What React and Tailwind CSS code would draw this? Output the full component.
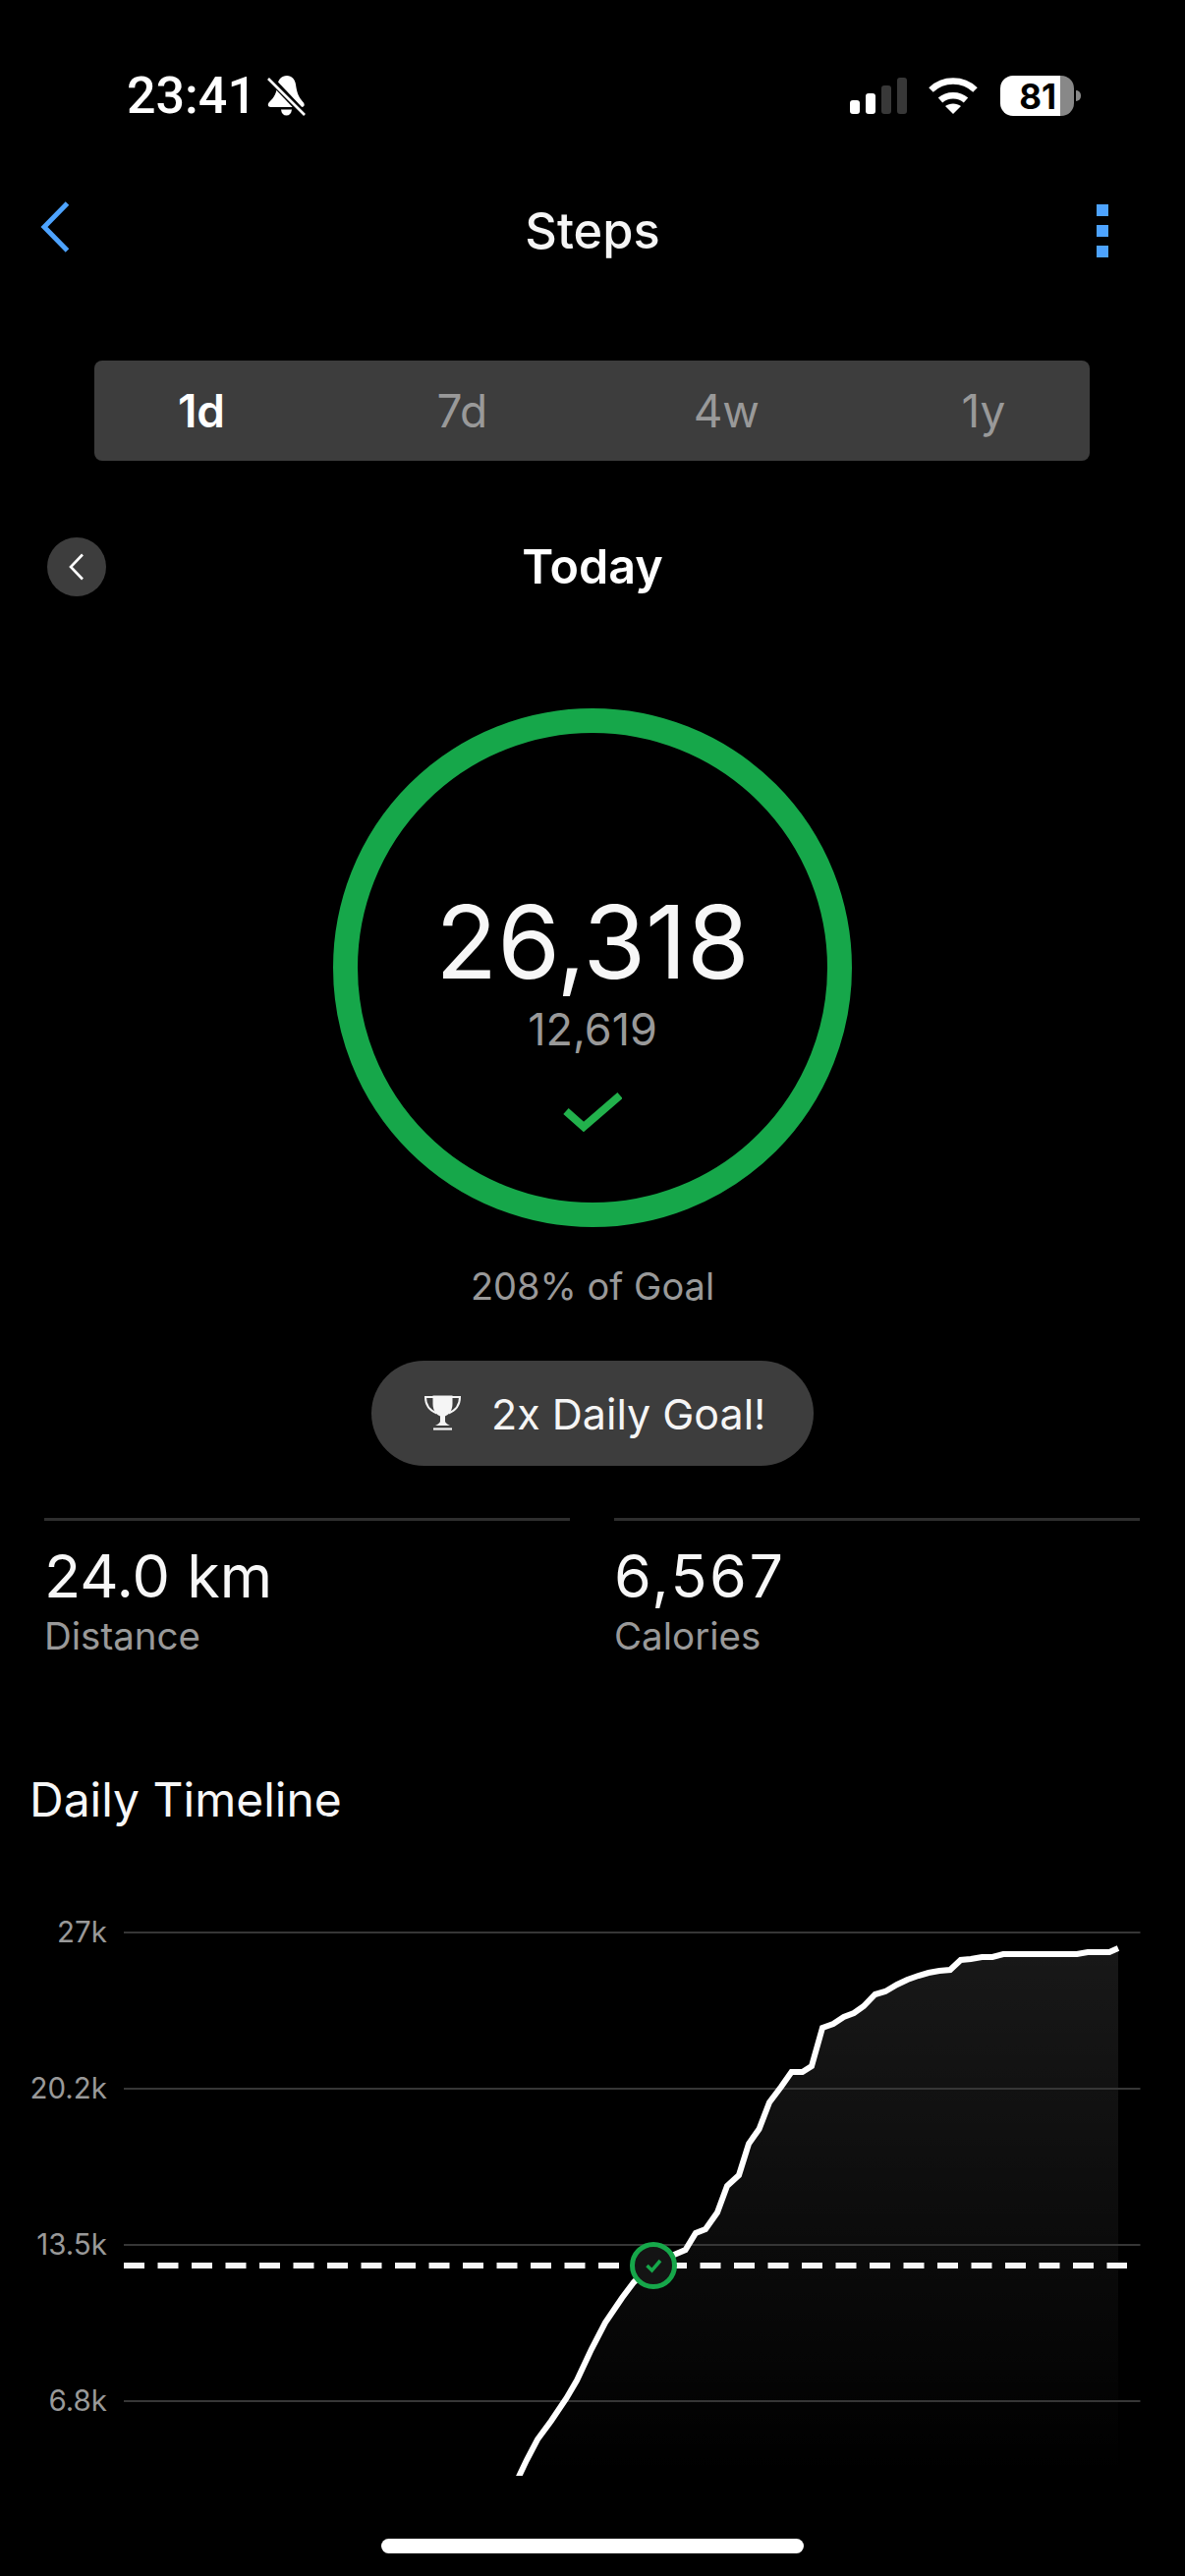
const pts = [[527,2522],[536,2503],[547,2482],[561,2463],[576.5,2440],[587,2422],[602,2390],[616,2363],[633,2338],[645,2322],[665,2303],[686,2294],[697.6,2289],[708,2272],[718,2268],[730,2251],[740,2224],[752,2213],[762,2181],[772.6,2166],[783,2139],[795,2123],[805.5,2108],[816.6,2108],[826,2102],[837,2063],[848,2059],[858.7,2052],[869,2048],[879,2041],[890.6,2029],[901,2026],[913,2019],[923.5,2014],[934.6,2010],[945,2007],[956,2005],[967,2004],[977.7,1994],[988,1993],[999.4,1991],[1010,1991],[1021,1988],[1096,1988],[1107,1986],[1129,1986],[1138,1982]];
const line = pts.map((p) => p.join(",")).join(" ");
const area = line + " 1138,2522";

function MutedBell() {
  return (
    <svg width="39" height="41" viewBox="0 0 39 41">
      <path d="M20 0C14.500 0 11.500 3.500 10.500 9C9.500 17 7.500 22 2 27C0 29 0.500 32 3.500 32H35C38 32 38.500 29 36.500 27C32 22 30 17 29 9C28 3.500 25 0 20 0Z" fill="#fff" />
      <path d="M14 34.500H25C24.500 38.500 22.500 40.500 19.500 40.500C16.500 40.500 14.500 38.500 14 34.500Z" fill="#fff" />
      <path d="M-1 -1L40 42" stroke="#000" strokeWidth="7" />
      <path d="M1 3L38 40" stroke="#fff" strokeWidth="2.600" />
    </svg>
  );
}

function Wifi() {
  return (
    <svg width="50" height="37" viewBox="0 0 50 37">
      <path d="M2.500 12.500C15 0.500 35 0.500 47.500 12.500" fill="none" stroke="#fff" strokeWidth="6.500" />
      <path d="M12 23C19 16.500 31 16.500 38 23" fill="none" stroke="#fff" strokeWidth="6.500" />
      <path d="M25 37L17 29C21.500 25.500 28.500 25.500 33 29Z" fill="#fff" />
    </svg>
  );
}

function Trophy() {
  return (
    <svg width="37" height="37" viewBox="0 0 37 37">
      <path d="M8.500 0.500H28.500V9C28.500 16 24.500 20 21 21.500V26.500C21 28 23 29.500 26 31H11C14 29.500 16 28 16 26.500V21.500C12.500 20 8.500 16 8.500 9Z" fill="#f5f5f5" />
      <path d="M9 2H1C1 10 5 15.500 12.500 18.500M28 2H36C36 10 32 15.500 24.500 18.500" fill="none" stroke="#f5f5f5" strokeWidth="2" />
      <path d="M9 34.500H28" stroke="#f5f5f5" strokeWidth="2.200" />
    </svg>
  );
}

function Stat({ value, label, valueClass }) {
  return (
    <div className="border-t-[3px] border-[#2e2e2e] pt-[25px]">
      <div className={"text-[61px] leading-[62px] text-[#f7f7f7] " + valueClass}>{value}</div>
      <div className="mt-[10px] text-[38.500px] leading-[41px] text-[#999999]">{label}</div>
    </div>
  );
}

function AxisLabel({ children }) {
  return (
    <div className="flex h-[159px] items-center justify-end pb-[3px] pr-[17px] text-[29.500px] leading-[30px] text-[#999999]">{children}</div>
  );
}

export default function App() {
  return (
    <div className="h-[2622px] w-[1206px] overflow-hidden bg-black font-['Inter',sans-serif] text-white">
      <div className="flex h-[118px] items-end justify-between pl-[129px] pr-[106px]">
        <div className="flex h-[41px] items-center gap-[11px]">
          <span className="font-['Roboto',sans-serif] text-[52px] font-medium leading-[41px]">23:41</span>
          <MutedBell />
        </div>
        <div className="flex h-[41px] items-center">
          <div className="flex h-[37px] items-end gap-[6px]">
            <div className="h-[14px] w-[10px] rounded-[3px] bg-white" />
            <div className="h-[21px] w-[10px] rounded-[3px] bg-white" />
            <div className="h-[29px] w-[10px] rounded-[3px] bg-[#383838]" />
            <div className="h-[37px] w-[10px] rounded-[3px] bg-[#383838]" />
          </div>
          <div className="ml-[22px] flex">
            <Wifi />
          </div>
          <div className="ml-[23px] flex h-[41px] w-[75px] overflow-hidden rounded-[13px]">
            <div className="flex w-[61px] items-center justify-end bg-white pr-[4px] text-[35px] font-bold leading-[36px] text-black">81</div>
            <div className="flex-1 bg-[#888888]" />
          </div>
          <div className="ml-[2px] h-[11px] w-[5px] rounded-r-full bg-[#888888]" />
        </div>
      </div>

      <div className="mt-[72px] grid h-[90px] grid-cols-[1fr_auto_1fr] items-center">
        <div className="pl-[41px]">
          <svg className="-mt-[8px] block" width="30" height="52" viewBox="0 0 30 52">
            <path d="M27.500 2L4 26L27.500 50" fill="none" stroke="#4da3ff" strokeWidth="5" />
          </svg>
        </div>
        <div className="text-[50.500px] font-medium leading-[52px] text-[#f5f5f5]">Steps</div>
        <div className="flex flex-col items-end gap-[9px] pr-[78px]">
          <div className="h-[12px] w-[12px] bg-[#4da3ff]" />
          <div className="h-[12px] w-[12px] bg-[#4da3ff]" />
          <div className="h-[12px] w-[12px] bg-[#4da3ff]" />
        </div>
      </div>

      <div className="ml-[96px] mt-[87px] flex h-[102px] w-[1013px] items-center justify-between rounded-[8px] bg-[#3d3d3d] pl-[79px] pr-[78px] text-[46px] leading-[46px] text-[#999999]">
        <span className="w-[60px] text-center font-semibold text-white">1d</span>
        <span className="w-[60px] text-center">7d</span>
        <span className="w-[60px] text-center">4w</span>
        <span className="w-[60px] text-center">1y</span>
      </div>

      <div className="mt-[78px] grid h-[60px] grid-cols-[1fr_auto_1fr] items-center">
        <div className="pl-[48px]">
          <div className="flex h-[60px] w-[60px] items-center justify-center rounded-full bg-[#3d3d3d]">
            <svg width="20" height="28" viewBox="0 0 20 28">
              <path d="M16 1.500L4 14L16 26.500" fill="none" stroke="#fff" strokeWidth="2.600" />
            </svg>
          </div>
        </div>
        <div className="text-[48.500px] font-semibold leading-[52px]">Today</div>
        <div />
      </div>

      <div className="mx-auto mt-[114px] flex h-[528px] w-[528px] flex-col items-center rounded-full border-[25px] border-[#16a74a] pt-[161px]">
        <div className="text-[103px] leading-[103px] text-[#f7f7f7]">26,318</div>
        <div className="mt-[16px] text-[45px] leading-[44px] text-[#999999]">12,619</div>
        <svg className="mt-[39px]" width="60" height="44" viewBox="0 0 60 44">
          <path d="M3 22L21 38L58 6" fill="none" stroke="#22b14c" strokeWidth="8" />
        </svg>
      </div>

      <div className="mt-[41px] text-center text-[38px] leading-[39px] text-[#999999]">208% of Goal</div>

      <div className="mx-auto mt-[56px] flex h-[107px] w-[450px] items-center gap-[31px] rounded-full bg-[#3d3d3d] pl-[54px]">
        <Trophy />
        <span className="text-[43px] leading-[46px] text-[#f5f5f5]">2x Daily Goal!</span>
      </div>

      <div className="mt-[53px] grid grid-cols-2 gap-[45px] pl-[45px] pr-[46px]">
        <Stat value="24.0 km" label="Distance" valueClass="" />
        <Stat value="6,567" label="Calories" valueClass="tracking-[2.500px]" />
      </div>

      <div className="mt-[121px] pl-[30px] text-[48px] leading-[50px] text-[#f7f7f7]">Daily Timeline</div>

      <div className="mt-[31px] flex h-[636px]">
        <div className="w-[126px] shrink-0">
          <AxisLabel>27k</AxisLabel>
          <AxisLabel>20.2k</AxisLabel>
          <AxisLabel>13.5k</AxisLabel>
          <AxisLabel>6.8k</AxisLabel>
        </div>
        <svg className="block shrink-0" width="1080" height="632" viewBox="126 1887 1080 632">
          <defs>
            <linearGradient id="area" gradientUnits="userSpaceOnUse" x1="0" y1="1983" x2="0" y2="2519">
              <stop offset="0" stopColor="#fff" stopOpacity="0.095" />
              <stop offset="0.6" stopColor="#fff" stopOpacity="0.04" />
              <stop offset="1" stopColor="#fff" stopOpacity="0" />
            </linearGradient>
          </defs>
          <polygon points={area} fill="url(#area)" />
          {[1966, 2125, 2284, 2443].map((y) => (
            <line key={y} x1="126" x2="1160.500" y1={y} y2={y} stroke="#363636" strokeWidth="2" />
          ))}
          <polyline points={line} fill="none" stroke="#fff" strokeWidth="6" strokeLinejoin="miter" />
          <line x1="126" x2="1147" y1="2305" y2="2305" stroke="#f7f7f7" strokeWidth="6" strokeDasharray="21 13.500" />
          <circle cx="665" cy="2305" r="21.500" fill="#141414" stroke="#16a74a" strokeWidth="5" />
          <path d="M658.500 2305L663.500 2310L672 2300" fill="none" stroke="#16a74a" strokeWidth="3.500" />
        </svg>
      </div>

      <div className="mx-auto mt-[60px] h-[15px] w-[430px] rounded-full bg-white" />
    </div>
  );
}
